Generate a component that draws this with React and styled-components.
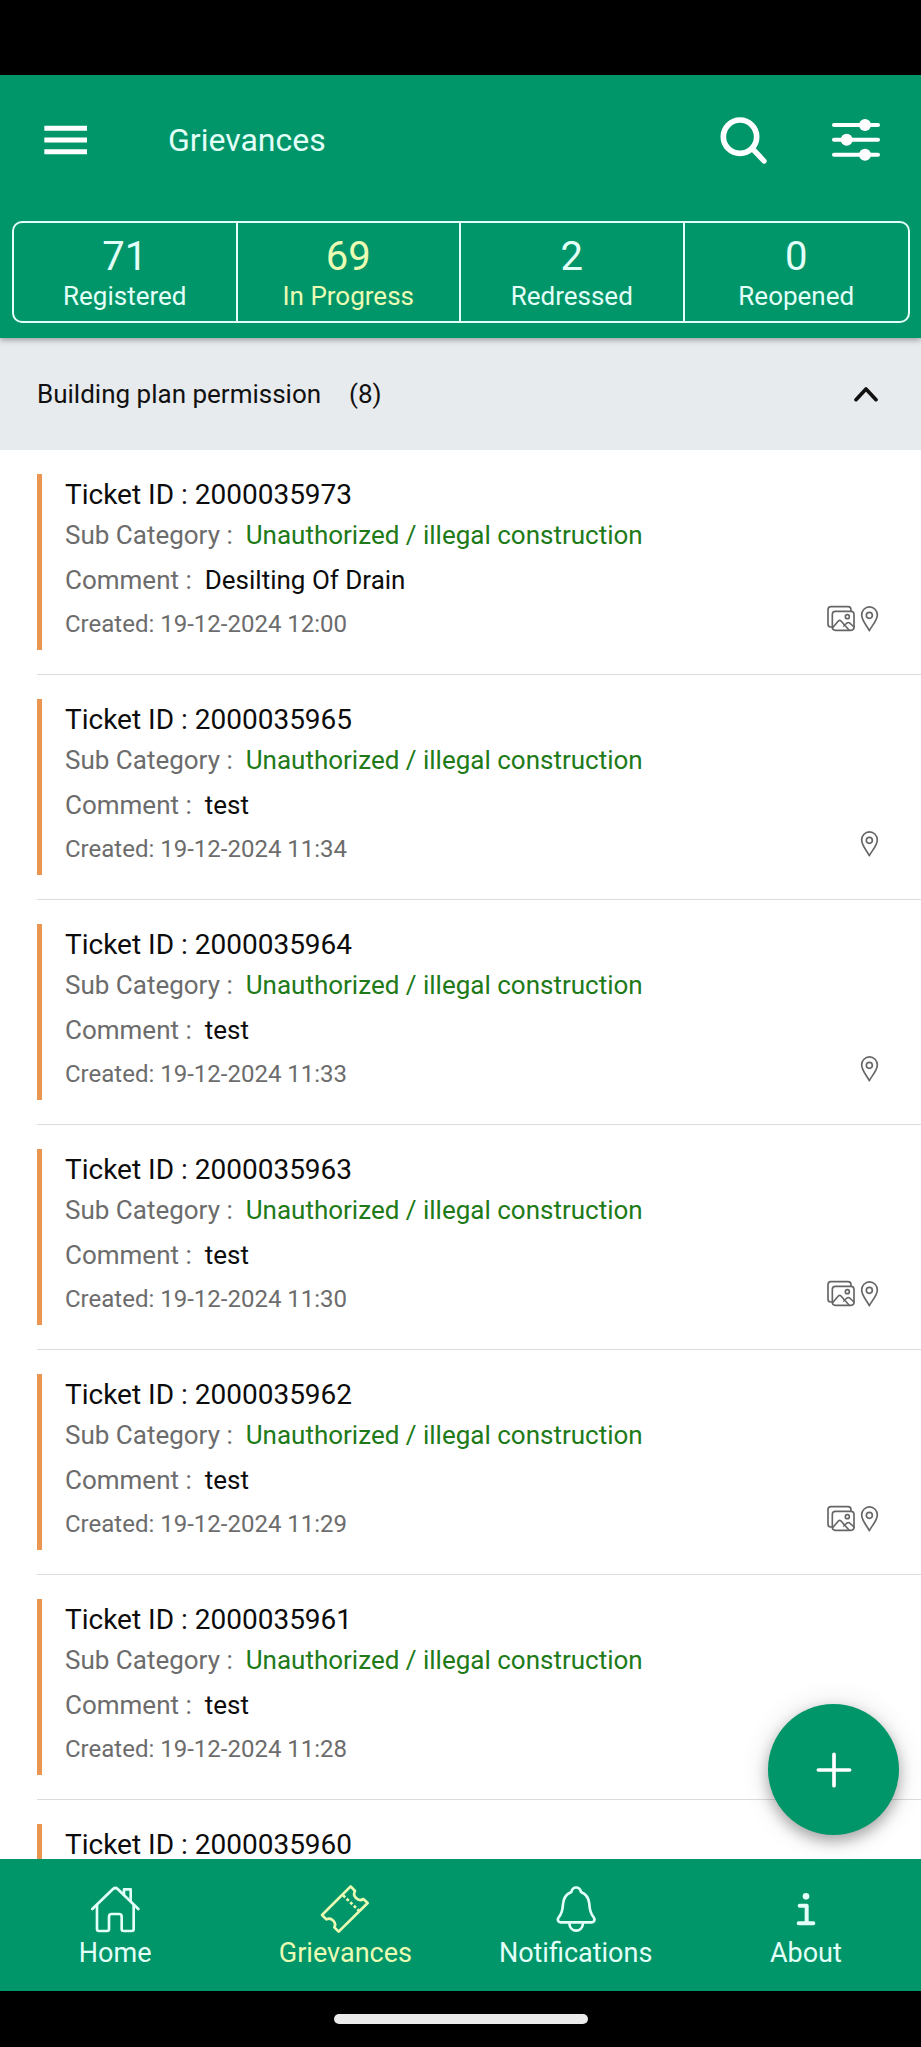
import React from 'react';
import styled, { createGlobalStyle, ThemeProvider } from 'styled-components';

const theme = {
  brand: '#009669',
  onBrand: '#e2fff8',
  active: '#eafbb4',
  section: '#e8ebee',
  accent: '#ea9550',
  category: '#207a18',
  muted: '#6c6c6c',
  divider: '#dcdcde',
};

const GlobalStyle = createGlobalStyle`
  * {
    box-sizing: border-box;
  }

  body {
    margin: 0;
    background: #fff;
    font-family: Roboto, sans-serif;
  }

  button {
    margin: 0;
    padding: 0;
    border: 0;
    background: none;
    color: inherit;
    font: inherit;
    cursor: pointer;
  }
`;

const Screen = styled.div`
  display: flex;
  flex-direction: column;
  height: 100vh;
`;

const StatusBar = styled.div`
  flex: none;
  height: 75px;
  background: #000;
`;

const Header = styled.header`
  position: relative;
  z-index: 1;
  flex: none;
  padding-bottom: 15px;
  background: ${props => props.theme.brand};
  color: ${props => props.theme.onBrand};
  box-shadow: 0 2px 6px rgba(0, 0, 0, 0.35);
`;

const Toolbar = styled.div`
  display: flex;
  align-items: center;
  height: 130px;
  padding: 0 38px;
`;

const Title = styled.h1`
  flex: 1;
  margin: 0;
  padding-left: 76px;
  font-size: 32px;
  font-weight: 400;
  line-height: 40px;
`;

const Actions = styled.div`
  display: flex;
  gap: 59px;
`;

const IconButton = styled.button`
  display: flex;
  color: #fff;
`;

const Icon = styled.svg`
  display: block;
  width: ${props => props.$width}px;
  height: ${props => props.$height || props.$width}px;
  fill: none;
  stroke: currentColor;
  stroke-linecap: round;
  stroke-linejoin: round;
`;

const Stats = styled.div`
  display: grid;
  grid-template-columns: repeat(4, 1fr);
  margin: 16px 11px 0 12px;
  border: 2px solid ${props => props.theme.onBrand};
  border-radius: 10px;
`;

const Stat = styled.button`
  display: flex;
  flex-direction: column;
  align-items: center;
  height: 98px;
  padding-top: 10px;
  color: ${props => (props.$active ? props.theme.active : 'inherit')};

  &:not(:last-child) {
    border-right: 2px solid ${props => props.theme.onBrand};
  }
`;

const StatValue = styled.span`
  font-size: 40px;
  line-height: 48px;
`;

const StatLabel = styled.span`
  font-size: 26px;
  line-height: 30px;
`;

const Content = styled.main`
  position: relative;
  flex: 1;
  min-height: 0;
  overflow: hidden;
`;

const SectionToggle = styled.button`
  display: flex;
  align-items: center;
  width: 100%;
  height: 112px;
  padding: 0 42px 0 37px;
  background: ${props => props.theme.section};
  color: #111;
  font-size: 26px;
  line-height: 32px;
`;

const SectionCount = styled.span`
  flex: 1;
  padding-left: 28px;
  text-align: left;
`;

const Tickets = styled.ul`
  margin: 0;
  padding: 0 0 0 37px;
  list-style: none;
`;

const Ticket = styled.li`
  display: flex;
  align-items: flex-end;
  padding: 24px 42px 24px 0;
  border-bottom: 1px solid ${props => props.theme.divider};
`;

const TicketBody = styled.div`
  flex: 1;
  min-height: 176px;
  padding: 1px 0 0 23px;
  border-left: 5px solid ${props => props.theme.accent};
`;

const TicketId = styled.h2`
  margin: 0;
  color: #0c0c0c;
  font-size: 28px;
  font-weight: 400;
  line-height: 40px;
`;

const Line = styled.div`
  display: flex;
  gap: 13px;
  padding: ${props => (props.$spaced ? '5px 0 4px' : '0')};
  color: ${props => props.theme.muted};
  font-size: ${props => (props.$small ? '24px' : '26px')};
  line-height: 40px;
`;

const Category = styled.span`
  color: ${props => props.theme.category};
`;

const Comment = styled.span`
  color: #0c0c0c;
`;

const Badges = styled.div`
  display: flex;
  gap: 5px;
  padding-bottom: 18px;
  color: #666;
`;

const AddButton = styled.button`
  position: absolute;
  right: 22px;
  bottom: 24px;
  display: flex;
  align-items: center;
  justify-content: center;
  width: 131px;
  height: 131px;
  border-radius: 50%;
  background: ${props => props.theme.brand};
  color: #fff;
  box-shadow: 0 6px 14px rgba(0, 0, 0, 0.3), 0 2px 30px rgba(0, 0, 0, 0.12);
`;

const BottomNav = styled.nav`
  display: grid;
  flex: none;
  grid-template-columns: repeat(4, 1fr);
  height: 132px;
  background: ${props => props.theme.brand};
`;

const NavLink = styled.a`
  display: flex;
  flex-direction: column;
  align-items: center;
  padding-top: 25px;
  color: ${props => (props.$active ? props.theme.active : props.theme.onBrand)};
  font-size: 27px;
  line-height: 32px;
  text-decoration: none;
`;

const NavLabel = styled.span`
  padding-top: 3px;
`;

const GestureBar = styled.div`
  display: flex;
  flex: none;
  justify-content: center;
  height: 56px;
  padding-top: 23px;
  background: #000;

  &::after {
    width: 254px;
    height: 10px;
    border-radius: 5px;
    background: #ebebeb;
    content: '';
  }
`;

const MenuIcon = () => (
  <Icon $width={54} viewBox="0 0 162 162" strokeWidth="15" aria-hidden="true">
    <path strokeLinecap="butt" d="M19 46h128M19 81h128M19 116h128" />
  </Icon>
);

const SearchIcon = () => (
  <Icon $width={54} viewBox="0 0 162 162" strokeWidth="17" aria-hidden="true">
    <circle cx="72" cy="71" r="50" />
    <path strokeWidth="16" d="M109 107l35 37" />
  </Icon>
);

const FilterIcon = () => (
  <Icon $width={54} viewBox="0 0 162 162" strokeWidth="12" aria-hidden="true">
    <path d="M15 36h132M15 80h132M15 125h132" />
    <g fill="currentColor" stroke="none">
      <circle cx="108" cy="36" r="18" />
      <circle cx="53" cy="80" r="18" />
      <circle cx="108" cy="125" r="18" />
    </g>
  </Icon>
);

const ChevronUpIcon = () => (
  <Icon $width={25} viewBox="0 0 75 75" strokeWidth="11" aria-hidden="true">
    <path d="M6 53l30-32 30 32" />
  </Icon>
);

const PhotosIcon = () => (
  <Icon $width={28} $height={27} viewBox="0 0 84 81" strokeWidth="5" role="img" aria-label="Photos">
    <path d="M15 66h-4q-8 0-8-8V14q0-9 9-9h51q9 0 9 9v3" />
    <rect x="16" y="19" width="65" height="57" rx="9" />
    <circle cx="61" cy="35" r="6" />
    <path d="M18 67l16-19q4-4 8 0l24 27M50 63l10-9q4-3 8 0l13 12" />
  </Icon>
);

const PinIcon = () => (
  <Icon $width={19} $height={27} viewBox="0 0 57 81" strokeWidth="5" role="img" aria-label="Location">
    <path d="M28 77C22 64 5 47 5 30a23 24 0 0 1 47 0c0 17-18 34-24 47z" />
    <circle cx="28" cy="31" r="9" />
  </Icon>
);

const PlusIcon = () => (
  <Icon $width={36} viewBox="0 0 108 108" strokeWidth="11" aria-hidden="true">
    <path d="M54 7v94M7 54h94" />
  </Icon>
);

const HomeIcon = () => (
  <Icon $width={50} viewBox="270 312 150 150" strokeWidth="8" aria-hidden="true">
    <path d="M277 387l62-60q7-6 14 0l62 60" />
    <path d="M291 376v71q0 6 6 6h24q6 0 6-6v-37q0-8 8-8h22q8 0 8 8v37q0 6 6 6h24q6 0 6-6v-71" />
    <path d="M372 342v-14h20v34" />
  </Icon>
);

const TicketIcon = () => (
  <Icon $width={50} viewBox="962 312 150 150" strokeWidth="8" aria-hidden="true">
    <path d="M1054 319l13 14c-9 14 9 34 25 24l13 12-87 86-13-13c8-14-9-32-24-24l-13-13z" />
    <path strokeLinecap="butt" strokeDasharray="9 6" d="M1031 346l49 47" />
  </Icon>
);

const BellIcon = () => (
  <Icon $width={50} viewBox="272 312 150 150" strokeWidth="8" aria-hidden="true">
    <path d="M333 336c4-18 25-18 29 0 17 7 24 19 25 36 1 22 4 30 13 40 5 7 2 15-6 15h-93c-8 0-11-8-6-15 9-10 12-18 13-40 1-17 8-29 25-36z" />
    <path d="M327 430c2 29 39 29 41 0" />
  </Icon>
);

const InfoIcon = () => (
  <Icon $width={50} viewBox="966 312 150 150" strokeWidth="12" aria-hidden="true">
    <circle cx="1041" cy="349" r="10" fill="currentColor" stroke="none" />
    <path d="M1022 377h21v53M1019 430h44" />
  </Icon>
);

const stats = [
  { value: 71, label: 'Registered' },
  { value: 69, label: 'In Progress', active: true },
  { value: 2, label: 'Redressed' },
  { value: 0, label: 'Reopened' },
];

const category = 'Unauthorized / illegal construction';

const tickets = [
  { id: '2000035973', category, comment: 'Desilting Of Drain', created: '19-12-2024 12:00', photos: true, pin: true },
  { id: '2000035965', category, comment: 'test', created: '19-12-2024 11:34', pin: true },
  { id: '2000035964', category, comment: 'test', created: '19-12-2024 11:33', pin: true },
  { id: '2000035963', category, comment: 'test', created: '19-12-2024 11:30', photos: true, pin: true },
  { id: '2000035962', category, comment: 'test', created: '19-12-2024 11:29', photos: true, pin: true },
  { id: '2000035961', category, comment: 'test', created: '19-12-2024 11:28' },
  { id: '2000035960' },
];

const links = [
  { label: 'Home', icon: HomeIcon },
  { label: 'Grievances', icon: TicketIcon, active: true },
  { label: 'Notifications', icon: BellIcon },
  { label: 'About', icon: InfoIcon },
];

function TicketRow({ ticket }) {
  return (
    <Ticket>
      <TicketBody>
        <TicketId>Ticket ID : {ticket.id}</TicketId>
        {ticket.category && (
          <Line>Sub Category : <Category>{ticket.category}</Category></Line>
        )}
        {ticket.comment && (
          <Line $spaced>Comment : <Comment>{ticket.comment}</Comment></Line>
        )}
        {ticket.created && <Line $small><span>Created: {ticket.created}</span></Line>}
      </TicketBody>
      <Badges>
        {ticket.photos && <PhotosIcon />}
        {ticket.pin && <PinIcon />}
      </Badges>
    </Ticket>
  );
}

function App() {
  const [open, setOpen] = React.useState(true);

  return (
    <ThemeProvider theme={theme}>
      <GlobalStyle />
      <Screen>
        <StatusBar />
        <Header>
          <Toolbar>
            <IconButton type="button" aria-label="Menu"><MenuIcon /></IconButton>
            <Title>Grievances</Title>
            <Actions>
              <IconButton type="button" aria-label="Search"><SearchIcon /></IconButton>
              <IconButton type="button" aria-label="Filter"><FilterIcon /></IconButton>
            </Actions>
          </Toolbar>
          <Stats>
            {stats.map(stat => (
              <Stat key={stat.label} type="button" $active={stat.active} aria-pressed={!!stat.active}>
                <StatValue>{stat.value}</StatValue>
                <StatLabel>{stat.label}</StatLabel>
              </Stat>
            ))}
          </Stats>
        </Header>
        <Content>
          <SectionToggle type="button" aria-expanded={open} onClick={() => setOpen(!open)}>
            <span>Building plan permission</span>
            <SectionCount>(8)</SectionCount>
            <ChevronUpIcon />
          </SectionToggle>
          {open && (
            <Tickets>
              {tickets.map(ticket => <TicketRow key={ticket.id} ticket={ticket} />)}
            </Tickets>
          )}
          <AddButton type="button" aria-label="Add grievance"><PlusIcon /></AddButton>
        </Content>
        <BottomNav>
          {links.map(({ label, icon: LinkIcon, active }) => (
            <NavLink key={label} href={`#${label.toLowerCase()}`} $active={active}>
              <LinkIcon />
              <NavLabel>{label}</NavLabel>
            </NavLink>
          ))}
        </BottomNav>
        <GestureBar />
      </Screen>
    </ThemeProvider>
  );
}

export default App;
